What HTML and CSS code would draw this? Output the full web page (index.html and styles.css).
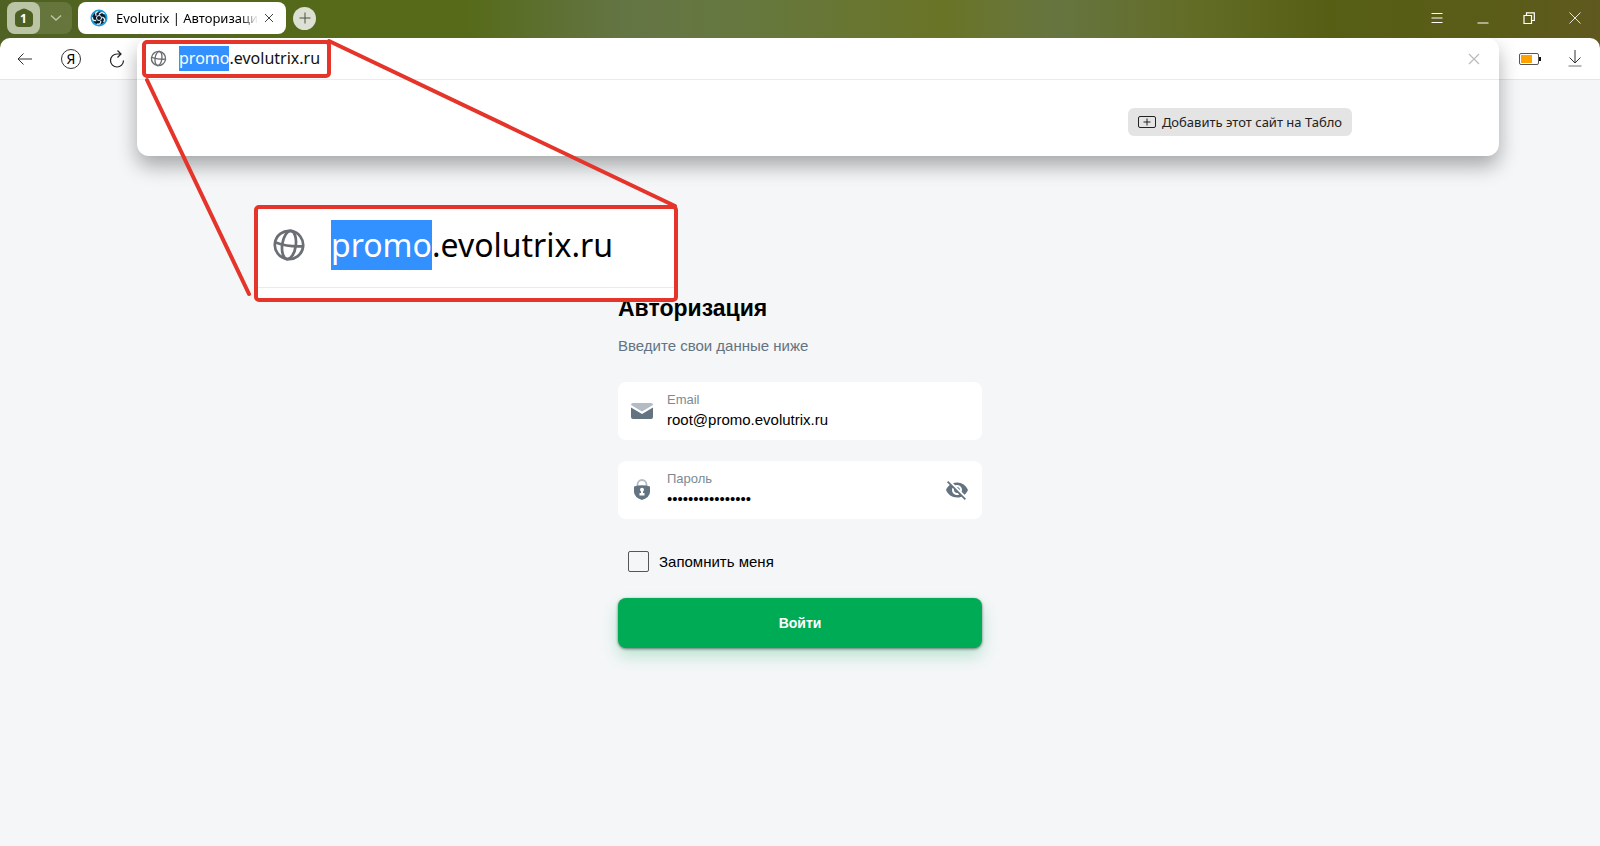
FILE: index.html
```html
<!DOCTYPE html>
<html lang="ru">
<head>
    <meta charset="UTF-8">
    <meta name="viewport" content="width=device-width, initial-scale=1.0">
    <title>Evolutrix | Авторизация</title>
    <link rel="stylesheet" href="styles.css">
</head>
<body>
    <svg class="sprite" aria-hidden="true">
        <symbol id="globe" viewBox="0 0 30 30">
            <g fill="none" stroke="#6b6f73" stroke-width="2.400" transform="rotate(8 15 15)">
                <circle cx="15" cy="15" r="12.500"/>
                <ellipse cx="15" cy="15" rx="6" ry="12.500"/>
                <path d="M3 14.500Q15 17 27 14.500"/>
            </g>
        </symbol>
    </svg>

    <header class="browser">
        <div class="titlebar">
            <div class="tab-group">
                <button class="group-count" type="button" aria-label="Группы вкладок">
                    <svg width="18" height="20" viewBox="0 0 18 20"><path d="M7 1Q9 0 11 1L16 3.500Q18 5 18 7V15Q18 19 14 19H4Q0 19 0 15V7Q0 5 2 3.500Z" fill="#4d6022"/></svg>
                    <span>1</span>
                </button>
                <button class="group-arrow" type="button" aria-label="Список вкладок">
                    <svg width="12" height="8" viewBox="0 0 12 8"><path d="M1 1.500L6 6L11 1.500" fill="none" stroke="#bcc4a8" stroke-width="1.500"/></svg>
                </button>
            </div>
            <div class="tab">
                <svg class="favicon" width="18" height="18" viewBox="0 0 18 18">
                    <circle cx="9" cy="9" r="8.500" fill="#1b9bdc"/>
                    <circle cx="9" cy="9" r="6.500" fill="#0b1a28"/>
                    <g fill="none" stroke="#e9f4fa" stroke-width="1.300">
                        <path d="M9 5.500Q11.500 2 14.500 5M12.300 8.200Q16.200 9.700 13.600 13M10.800 12Q10.800 16 6.800 15M6.200 11.500Q2.200 12.300 2.500 8.300M6.200 6.800Q4.500 3 8.300 2.600"/>
                    </g>
                    <circle cx="9" cy="9" r="2.500" fill="#0b1a28" stroke="#e9f4fa"/>
                </svg>
                <span class="tab-title">Evolutrix | Авторизация</span>
                <button class="tab-close" type="button" aria-label="Закрыть вкладку">
                    <svg width="10" height="10" viewBox="0 0 10 10"><path d="M1 1L9 9M9 1L1 9" stroke="#444" stroke-width="1"/></svg>
                </button>
            </div>
            <button class="new-tab" type="button" aria-label="Новая вкладка">
                <svg width="12" height="12" viewBox="0 0 12 12"><path d="M6 0.500V11.500M0.500 6H11.500" stroke="#4b5340" stroke-width="1"/></svg>
            </button>
            <div class="window-controls">
                <button type="button" aria-label="Меню"><svg width="12" height="12" viewBox="0 0 12 12"><path d="M0.500 1.500H11.500M0.500 6H11.500M0.500 10.500H11.500" stroke="#fff"/></svg></button>
                <button type="button" aria-label="Свернуть"><svg width="12" height="12" viewBox="0 0 12 12"><path d="M0.500 11H11.500" stroke="#fff"/></svg></button>
                <button type="button" aria-label="Развернуть"><svg width="12" height="12" viewBox="0 0 12 12"><path d="M1 3.500H8.500V11.500H1ZM3.500 3V0.800H11.300V8.500H9" fill="none" stroke="#fff" stroke-width="1.200"/></svg></button>
                <button type="button" aria-label="Закрыть"><svg width="12" height="12" viewBox="0 0 12 12"><path d="M0.500 0.500L11.500 11.500M11.500 0.500L0.500 11.500" stroke="#e6e6da"/></svg></button>
            </div>
        </div>

        <div class="toolbar">
            <nav class="toolbar-nav">
                <button type="button" aria-label="Назад"><svg width="16" height="12" viewBox="0 0 16 12"><path d="M15 6H1.500M6.500 0.500L1 6L6.500 11.500" fill="none" stroke="#333"/></svg></button>
                <button class="yandex" type="button" aria-label="Яндекс">Я</button>
                <button type="button" aria-label="Обновить"><svg width="16" height="18" viewBox="0 0 16 18"><path d="M14.500 10.500A6.500 6.500 0 1 1 8 4H11.500M8.500 0.500L12 4L8.500 7.500" fill="none" stroke="#222" stroke-width="1.200"/></svg></button>
            </nav>
            <div class="omnibox">
                <div class="suggest">
                    <div class="address">
                        <svg width="17" height="17"><use href="#globe"/></svg>
                        <input type="text" id="address" value="promo.evolutrix.ru" aria-label="Адрес" spellcheck="false">
                        <button type="button" aria-label="Очистить"><svg width="12" height="12" viewBox="0 0 12 12"><path d="M1 1L11 11M11 1L1 11" stroke="#bbb" stroke-width="1.200"/></svg></button>
                    </div>
                    <div class="suggest-body">
                        <button class="add-site" type="button">
                            <svg width="18" height="12" viewBox="0 0 18 12"><rect x="0.500" y="0.500" width="17" height="11" rx="1.500" fill="none" stroke="#222"/><path d="M9 2.500V9.500M5.500 6H12.500" stroke="#222"/></svg>
                            Добавить этот сайт на Табло
                        </button>
                    </div>
                </div>
            </div>
            <div class="toolbar-extra">
                <button type="button" aria-label="Батарея"><svg width="22" height="12" viewBox="0 0 22 12"><rect x="0.500" y="0.500" width="19" height="11" rx="1.500" fill="#fff" stroke="#555"/><rect x="2" y="2" width="11" height="8" fill="#ffa200"/><rect x="20" y="4" width="2" height="4" fill="#111"/></svg></button>
                <button type="button" aria-label="Загрузки"><svg width="14" height="17" viewBox="0 0 14 17"><path d="M7 0V13M1.500 7.500L7 13L12.500 7.500" fill="none" stroke="#333"/><path d="M0.500 16H13.500" stroke="#777"/></svg></button>
            </div>
        </div>
    </header>

    <main class="login">
        <h1>Авторизация</h1>
        <p class="subtitle">Введите свои данные ниже</p>
        <form id="loginForm">
            <div class="field">
                <svg width="24" height="24" viewBox="0 0 24 24"><path d="M1 6Q1 4 3 4H21Q23 4 23 6L12 12.500Z" fill="#b3bbc4"/><path d="M1 8.500L12 15L23 8.500V18Q23 20 21 20H3Q1 20 1 18Z" fill="#637381"/></svg>
                <div class="field-text">
                    <label for="email">Email</label>
                    <input type="email" id="email" name="email" value="root@promo.evolutrix.ru">
                </div>
            </div>
            <div class="field">
                <svg width="24" height="24" viewBox="0 0 24 24"><path d="M7.500 8V6.500A4.500 4.500 0 0 1 16.500 6.500V8" fill="none" stroke="#b3bbc4" stroke-width="1.800"/><path d="M4 8.500Q12 6 20 8.500V14Q20 19 12 22Q4 19 4 14Z" fill="#637381"/><circle cx="12" cy="11.800" r="2" fill="#fff"/><path d="M11 13H13V15H14.500V17.500H9.500V15H11Z" fill="#fff"/></svg>
                <div class="field-text">
                    <label for="password">Пароль</label>
                    <input type="password" id="password" name="password" value="evolutrix-promo1">
                </div>
                <button class="toggle" type="button" aria-label="Показать пароль">
                    <svg width="24" height="24" viewBox="0 0 24 24"><path d="M12 7c2.760 0 5 2.240 5 5 0 .65-.13 1.260-.36 1.830l2.920 2.920c1.510-1.260 2.700-2.890 3.430-4.750-1.730-4.390-6-7.500-11-7.500-1.400 0-2.740.25-3.980.7l2.160 2.160C10.740 7.130 11.350 7 12 7zM2 4.270l2.280 2.280.46.46C3.080 8.300 1.780 10.020 1 12c1.730 4.390 6 7.500 11 7.500 1.550 0 3.030-.3 4.380-.84l.42.42L19.730 22 21 20.730 3.270 3 2 4.270zM7.530 9.800l1.550 1.550c-.05.21-.08.43-.08.65 0 1.660 1.340 3 3 3 .22 0 .44-.03.65-.08l1.550 1.550c-.67.33-1.410.53-2.200.53-2.760 0-5-2.240-5-5 0-.79.2-1.530.53-2.200zm4.310-.78l3.150 3.150.02-.16c0-1.660-1.340-3-3-3l-.17.01z" fill="#637381"/></svg>
                </button>
            </div>
            <div class="remember">
                <input type="checkbox" id="remember" name="remember">
                <label for="remember">Запомнить меня</label>
            </div>
            <button class="submit" type="submit">Войти</button>
        </form>
    </main>

    <!-- выноска с увеличенным адресом -->
    <svg class="pointer" width="690" height="310" viewBox="0 0 690 310" aria-hidden="true">
        <g fill="none" stroke="#e5342a" stroke-width="4" stroke-linecap="round" stroke-linejoin="round">
            <rect x="144" y="42" width="185" height="34" rx="3"/>
            <path d="M147 80L249 294M329 41L675 206"/>
        </g>
    </svg>
    <div class="callout">
        <div class="callout-row">
            <svg width="34" height="34"><use href="#globe"/></svg>
            <span class="callout-url"><mark>promo</mark>.evolutrix.ru</span>
        </div>
    </div>

    <script>
        const address = document.getElementById('address');
        address.focus();
        address.setSelectionRange(0, 'promo'.length);

        document.getElementById('loginForm').addEventListener('submit', (event) => {
            event.preventDefault();
        });
    </script>
</body>
</html>
```
FILE: styles.css
```css
* {
    box-sizing: border-box;
}

body {
    position: relative;
    margin: 0;
    min-height: 100vh;
    font-family: "Liberation Sans", Arial, sans-serif;
    background-color: #f4f6f8;
    color: #000;
}

button {
    display: flex;
    align-items: center;
    justify-content: center;
    padding: 0;
    border: none;
    background: none;
    font-family: inherit;
    cursor: pointer;
}

svg {
    display: block;
    flex-shrink: 0;
}

.sprite {
    position: absolute;
    width: 0;
    height: 0;
}

/* browser */
.browser {
    font-family: "Noto Sans", sans-serif;
    background: linear-gradient(90deg, #4f6123 0%, #566a19 22%, #566a19 29%, #647545 39%, #66783e 47%, #6a7427 59%, #667540 66%, #636c25 75%, #565e14 83%, #5a5c18 94%, #60581f 100%);
}

.titlebar {
    display: flex;
    align-items: center;
    height: 38px;
    padding: 0 2px 2px 7px;
}

.tab-group {
    display: flex;
    height: 32px;
    margin-right: 6px;
    border-radius: 8px;
    background-color: rgba(255, 255, 255, 0.12);
}

.group-count {
    position: relative;
    width: 33px;
    border-radius: 8px;
    background-color: #bcc4a6;
}

.group-count span {
    position: absolute;
    color: #fff;
    font-size: 12px;
    font-weight: 700;
}

.group-arrow {
    width: 32px;
}

.tab {
    display: flex;
    align-items: center;
    width: 208px;
    height: 32px;
    padding: 0 12px;
    border-radius: 8px;
    background-color: #fff;
}

.tab-title {
    flex: 1;
    margin-left: 8px;
    overflow: hidden;
    white-space: nowrap;
    font-size: 13px;
    -webkit-mask-image: linear-gradient(90deg, #000 88%, transparent);
    mask-image: linear-gradient(90deg, #000 88%, transparent);
}

.tab-close {
    margin-left: 6px;
}

.new-tab {
    width: 23px;
    height: 23px;
    margin-left: 7px;
    border-radius: 50%;
    background-color: #dde1d3;
}

.window-controls {
    display: flex;
    margin-left: auto;
}

.window-controls button {
    width: 46px;
    height: 36px;
}

.toolbar {
    display: flex;
    height: 42px;
    border-bottom: 1px solid #e4e5e7;
    border-radius: 10px 10px 0 0;
    background-color: #fff;
}

.toolbar-nav {
    display: flex;
    align-items: center;
    gap: 28px;
    width: 137px;
    padding-left: 17px;
}

.yandex {
    width: 20px;
    height: 20px;
    border: 1px solid #333;
    border-radius: 50%;
    font-size: 14px;
    color: #000;
}

.omnibox {
    position: relative;
    flex: 1;
}

.suggest {
    position: absolute;
    top: 0;
    left: 0;
    right: 0;
    border-radius: 12px;
    background-color: #fff;
    box-shadow: 0 10px 20px rgba(0, 0, 0, 0.32);
    clip-path: inset(0 -40px -40px -40px);
}

.address {
    display: flex;
    align-items: center;
    height: 42px;
    padding: 0 19px 0 13px;
    border-bottom: 1px solid #ebebeb;
}

.address input {
    flex: 1;
    height: 25px;
    margin-left: 12px;
    padding: 0;
    border: none;
    outline: none;
    font-family: inherit;
    font-size: 16px;
    line-height: 25px;
    color: #111;
}

.address input::selection {
    background-color: #3390ff;
    color: #fff;
}

.suggest-body {
    display: flex;
    justify-content: flex-end;
    padding: 28px 147px 20px 0;
}

.add-site {
    gap: 6px;
    height: 28px;
    padding: 0 10px;
    border-radius: 6px;
    background-color: #e4e4e4;
    font-size: 13px;
    color: #222;
}

.toolbar-extra {
    display: flex;
    align-items: center;
    justify-content: space-between;
    width: 101px;
    padding: 0 18px 0 20px;
}

/* login form */
.login {
    width: 100%;
    max-width: 364px;
    margin: 0 auto;
    padding: 214px 0 40px;
}

h1 {
    margin: 0;
    font-size: 23px;
    line-height: 28px;
}

.subtitle {
    margin: 14px 0 26px;
    font-size: 15px;
    line-height: 20px;
    color: #637381;
}

.field {
    display: flex;
    align-items: center;
    height: 58px;
    margin-bottom: 21px;
    padding: 0 13px 0 12px;
    border-radius: 8px;
    background-color: #fff;
}

.field-text {
    flex: 1;
    margin-left: 13px;
    padding-bottom: 2px;
}

.field label {
    display: block;
    font-size: 13px;
    line-height: 18px;
    color: #7d8994;
}

.field input {
    display: block;
    width: 100%;
    height: 20px;
    padding: 0;
    border: none;
    outline: none;
    background: none;
    font-family: inherit;
    font-size: 15px;
}

.remember {
    display: flex;
    align-items: center;
    gap: 10px;
    height: 22px;
    margin: 31px 0 26px;
    padding-left: 10px;
    font-size: 15px;
}

.remember input {
    appearance: none;
    width: 21px;
    height: 21px;
    margin: 0;
    border: 1px solid #555;
    border-radius: 2px;
}

.submit {
    width: 100%;
    height: 50px;
    border-radius: 8px;
    background-color: #00ab55;
    box-shadow: 0 1px 3px rgba(0, 0, 0, 0.5), 0 8px 16px rgba(0, 171, 85, 0.24);
    color: #fff;
    font-size: 14px;
    font-weight: 700;
}

/* callout */
.pointer {
    position: absolute;
    top: 0;
    left: 0;
    pointer-events: none;
}

.callout {
    position: absolute;
    top: 205px;
    left: 254px;
    width: 424px;
    height: 97px;
    border: 4px solid #e5342a;
    border-radius: 5px;
    background-color: #fff;
}

.callout-row {
    display: flex;
    align-items: center;
    gap: 25px;
    height: 79px;
    padding: 0 0 6px 14px;
    border-bottom: 1px solid #e9eaec;
}

.callout-url {
    font-family: "Noto Sans", sans-serif;
    font-size: 32px;
    line-height: 50px;
}

.callout-url mark {
    display: inline-block;
    background-color: #3390ff;
    color: #fff;
}
```
